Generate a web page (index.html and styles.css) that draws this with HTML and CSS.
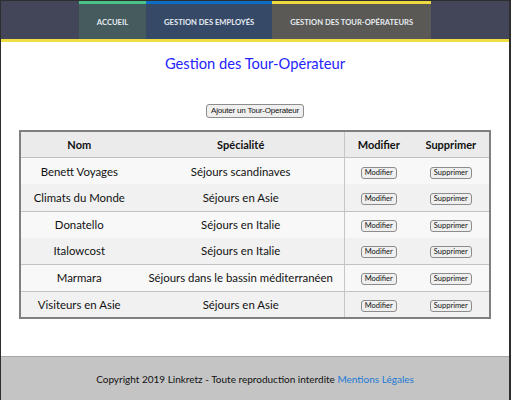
FILE: index.html
```html
<!DOCTYPE html>
<html lang="fr">
<head>
<meta charset="utf-8">
<title>Gestion des Tour-Opérateur</title>
<link rel="stylesheet" href="styles.css">
</head>
<body>
<div class="page">
  <header class="topbar">
    <nav class="menu">
      <a class="menu-item item-home" href="#">ACCUEIL</a>
      <a class="menu-item item-emp" href="#">GESTION DES EMPLOYÉS</a>
      <a class="menu-item item-to" href="#">GESTION DES TOUR-OPÉRATEURS</a>
    </nav>
  </header>
  <main class="content">
    <h1 class="title">Gestion des Tour-Opérateur</h1>
    <div class="add-wrap"><button class="btn add-btn">Ajouter un Tour-Operateur</button></div>
    <table class="grid">
      <thead>
        <tr class="line">
          <th class="c-nom">Nom</th>
          <th class="c-spec">Spécialité</th>
          <th class="c-mod">Modifier</th>
          <th class="c-sup">Supprimer</th>
        </tr>
      </thead>
      <tbody>
        <tr class="odd"><td>Benett Voyages</td><td>Séjours scandinaves</td><td class="c-mod"><button class="btn sm">Modifier</button></td><td><button class="btn sm">Supprimer</button></td></tr>
        <tr class="even line"><td>Climats du Monde</td><td>Séjours en Asie</td><td class="c-mod"><button class="btn sm">Modifier</button></td><td><button class="btn sm">Supprimer</button></td></tr>
        <tr class="odd"><td>Donatello</td><td>Séjours en Italie</td><td class="c-mod"><button class="btn sm">Modifier</button></td><td><button class="btn sm">Supprimer</button></td></tr>
        <tr class="even line"><td>Italowcost</td><td>Séjours en Italie</td><td class="c-mod"><button class="btn sm">Modifier</button></td><td><button class="btn sm">Supprimer</button></td></tr>
        <tr class="odd line"><td>Marmara</td><td>Séjours dans le bassin méditerranéen</td><td class="c-mod"><button class="btn sm">Modifier</button></td><td><button class="btn sm">Supprimer</button></td></tr>
        <tr class="even"><td>Visiteurs en Asie</td><td>Séjours en Asie</td><td class="c-mod"><button class="btn sm">Modifier</button></td><td><button class="btn sm">Supprimer</button></td></tr>
      </tbody>
    </table>
  </main>
  <footer class="footer">
    <p class="footer-text">Copyright 2019 Linkretz - Toute reproduction interdite <a href="#" class="legal">Mentions Légales</a></p>
  </footer>
</div>
</body>
</html>
```

FILE: styles.css
```css
* { box-sizing: border-box; }
html, body { margin: 0; padding: 0; background: #fff; }
body { font-family: Lato, "Open Sans", sans-serif; color: #111; }

.page {
  width: 511px;
  height: 400px;
  border-top: 1px solid #2e2e2e;
  border-left: 1px solid #2e2e2e;
  border-right: 2px solid #2e2e2e;
  display: flex;
  flex-direction: column;
}

.topbar {
  background: #434659;
  height: 41px;
  flex: none;
  border-bottom: 3px solid #f0dc44;
  display: flex;
  justify-content: center;
}
.menu { display: flex; height: 38px; }
.menu-item {
  display: flex;
  align-items: center;
  padding: 0 18px;
  border-top: 3px solid;
  color: #e6ecf2;
  text-decoration: none;
  font-size: 7.6px;
  font-weight: 700;
}
.item-home { background: #455b5e; border-top-color: #49c486; }
.item-emp { background: #364a67; border-top-color: #0a6ec4; }
.item-to { background: #5b5955; border-top-color: #f0d840; }

.content { flex: 1; }
.title {
  margin: 11px 0 0;
  text-align: center;
  font-size: 14.7px;
  font-weight: 400;
  color: #2424ff;
  line-height: 20px;
}
.add-wrap { text-align: center; margin-top: 24px; }
.btn {
  font-family: Lato, sans-serif;
  background: #efefef;
  border: 1px solid #8c8c8c;
  border-radius: 3px;
  color: #111;
  padding: 0 3px;
  cursor: pointer;
}
.add-btn {
  font-family: "Liberation Sans", Arial, sans-serif;
  font-size: 8px;
  height: 14px;
  line-height: 12px;
  letter-spacing: -0.2px;
  padding: 0 4px;
}
.grid {
  width: 472px;
  margin: 12px auto 0;
  border-collapse: collapse;
  border: 2px solid #808080;
  font-size: 11.4px;
  table-layout: fixed;
}
.grid th, .grid td {
  text-align: center;
  padding: 0;
  height: 26.7px;
}
.grid th { background: #ebebeb; font-weight: 700; font-size: 11px; }
.c-nom { width: 117px; }
.c-spec { width: 206px; }
.c-mod { width: 68px; border-left: 1px solid #c6c6c6; }
.c-sup { width: 77px; }
.odd td { background: #f8f8f8; }
.even td { background: #f1f1f1; }
tr.line th, tr.line td { border-bottom: 1px solid #c2c2c2; }
.grid .sm {
  font-size: 7.5px;
  height: 12px;
  line-height: 10px;
  padding: 0 3px;
}

.footer {
  height: 44px;
  flex: none;
  background: #c4c4c4;
  border-top: 1px solid #a6a6a6;
  display: flex;
  align-items: center;
  justify-content: center;
}
.footer-text { margin: 0; font-size: 10px; color: #111; }
.legal { color: #1e7ad4; text-decoration: none; }
```
